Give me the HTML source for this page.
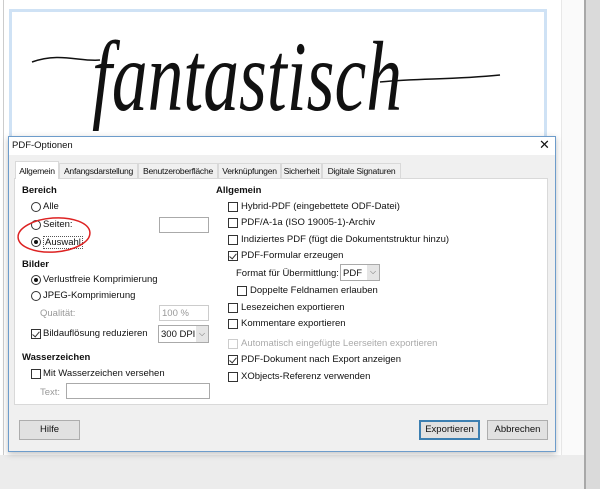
<!DOCTYPE html>
<html><head><meta charset="utf-8"><style>
*{margin:0;padding:0;box-sizing:border-box}
body{width:600px;height:489px;overflow:hidden;background:#fff;font-family:"Liberation Sans",sans-serif;font-size:9.5px;color:#111;position:relative}
.abs{position:absolute}
.rb{position:absolute;width:10px;height:10px;border:1px solid #333;border-radius:50%;background:#fff}
.rb.on::after{content:"";position:absolute;left:2px;top:2px;width:4px;height:4px;border-radius:50%;background:#111}
.cb{position:absolute;width:10px;height:10px;border:1px solid #333;background:#fff}
.cb.on::after{content:"";position:absolute;left:2px;top:0px;width:3px;height:6px;border:solid #333;border-width:0 1px 1px 0;transform:rotate(40deg)}
.t{position:absolute;white-space:nowrap}
.b{font-weight:bold}
.g{color:#999}
.inp{position:absolute;border:1px solid #aaa;background:#fff}
.btn{position:absolute;border:1px solid #adadad;background:#e1e1e1;text-align:center;line-height:18px}
.tab{position:absolute;top:163px;height:15px;line-height:14px;border:1px solid #d9d9d9;border-bottom:none;background:#f0f0f0;font-size:8.6px;letter-spacing:-0.25px;text-align:center;white-space:nowrap;overflow:hidden}
</style></head><body>
<div class="abs" style="left:3px;top:0;width:1px;height:489px;background:#ccc"></div>
<div class="abs" style="left:561px;top:0;width:23px;height:489px;background:#fafafa;border-left:1px solid #e8e8e8"></div>
<div class="abs" style="left:584px;top:0;width:16px;height:489px;background:#dadada;border-left:2px solid #a8a8a8"></div>
<div class="abs" style="left:0;top:455px;width:584px;height:34px;background:#ececec"></div>
<div class="abs" style="left:9px;top:9px;width:538px;height:140px;border:3px solid #cfe2f5"></div>
<svg class="abs" style="left:0;top:0" width="560" height="140">
<path d="M32 62 C60 52 80 62 100 60" stroke="#111" stroke-width="1.5" fill="none"/>
<path d="M380 82 C420 78 450 80 500 75" stroke="#111" stroke-width="1.5" fill="none"/>
<text x="92" y="112" font-family="Liberation Serif" font-style="italic" font-size="80" fill="#111" textLength="310" lengthAdjust="spacingAndGlyphs" transform="translate(0,-30) scale(1,1.25)">fantastisch</text>
</svg>
<div class="abs" style="left:8px;top:136px;width:548px;height:316px;background:#f0f0f0;border:1px solid #6d9ccb;box-shadow:0 2px 6px rgba(0,0,0,.25)">
</div>
<div class="abs" style="left:9px;top:137px;width:546px;height:18px;background:#fff"></div>
<div class="t" style="left:12px;top:140px">PDF-Optionen</div>
<div class="t" style="left:539px;top:137px;font-size:13px">✕</div>
<div class="abs" style="left:14px;top:178px;width:534px;height:227px;background:#fff;border:1px solid #d9d9d9"></div>
<div class="tab" style="left:15px;top:161px;width:44px;height:18px;background:#fff;padding-top:2px">Allgemein</div>
<div class="tab" style="left:59px;width:79px">Anfangsdarstellung</div>
<div class="tab" style="left:138px;width:80px">Benutzeroberfläche</div>
<div class="tab" style="left:218px;width:63px">Verknüpfungen</div>
<div class="tab" style="left:281px;width:41px">Sicherheit</div>
<div class="tab" style="left:322px;width:79px">Digitale Signaturen</div>

<div class="t b" style="left:22px;top:185px">Bereich</div>
<div class="rb" style="left:31px;top:202px"></div><div class="t" style="left:43px;top:201px">Alle</div>
<div class="rb" style="left:31px;top:220px"></div><div class="t" style="left:43px;top:219px">Seiten:</div>
<div class="inp" style="left:159px;top:217px;width:50px;height:16px"></div>
<div class="rb on" style="left:31px;top:237px"></div><div class="t" style="left:43px;top:236px;border:1px dotted #555;padding:0 1px">Auswahl</div>
<svg class="abs" style="left:16px;top:215px" width="80" height="40"><ellipse cx="38" cy="20" rx="36" ry="17" fill="none" stroke="#d22" stroke-width="1.5" transform="rotate(-4 38 20)"/></svg>
<div class="t b" style="left:22px;top:259px">Bilder</div>
<div class="rb on" style="left:31px;top:275px"></div><div class="t" style="left:43px;top:274px">Verlustfreie Komprimierung</div>
<div class="rb" style="left:31px;top:291px"></div><div class="t" style="left:43px;top:290px">JPEG-Komprimierung</div>
<div class="t g" style="left:40px;top:308px">Qualität:</div>
<div class="inp" style="left:159px;top:305px;width:50px;height:16px;border-color:#ccc"></div><div class="t g" style="left:162px;top:308px">100 %</div>
<div class="cb on" style="left:31px;top:329px"></div><div class="t" style="left:43px;top:328px">Bildauflösung reduzieren</div>
<div class="inp" style="left:158px;top:325px;width:51px;height:18px"></div><div class="t" style="left:161px;top:329px">300 DPI</div>
<div class="abs" style="left:196px;top:326px;width:12px;height:16px;background:#e5e5e5;font-size:8px;text-align:center;line-height:15px;color:#666">⌵</div>
<div class="t b" style="left:22px;top:352px">Wasserzeichen</div>
<div class="cb" style="left:31px;top:369px"></div><div class="t" style="left:43px;top:368px">Mit Wasserzeichen versehen</div>
<div class="t g" style="left:40px;top:387px">Text:</div>
<div class="inp" style="left:66px;top:383px;width:144px;height:16px"></div>

<div class="t b" style="left:216px;top:185px">Allgemein</div>
<div class="cb" style="left:228px;top:202px"></div><div class="t" style="left:241px;top:201px">Hybrid-PDF (eingebettete ODF-Datei)</div>
<div class="cb" style="left:228px;top:218px"></div><div class="t" style="left:241px;top:217px">PDF/A-1a (ISO 19005-1)-Archiv</div>
<div class="cb" style="left:228px;top:235px"></div><div class="t" style="left:241px;top:234px">Indiziertes PDF (fügt die Dokumentstruktur hinzu)</div>
<div class="cb on" style="left:228px;top:251px"></div><div class="t" style="left:241px;top:250px">PDF-Formular erzeugen</div>
<div class="t" style="left:236px;top:268px">Format für Übermittlung:</div>
<div class="inp" style="left:340px;top:264px;width:40px;height:17px"></div><div class="t" style="left:343px;top:268px">PDF</div>
<div class="abs" style="left:367px;top:265px;width:12px;height:15px;background:#e5e5e5;font-size:8px;text-align:center;line-height:14px;color:#666">⌵</div>
<div class="cb" style="left:237px;top:286px"></div><div class="t" style="left:250px;top:285px">Doppelte Feldnamen erlauben</div>
<div class="cb" style="left:228px;top:303px"></div><div class="t" style="left:241px;top:302px">Lesezeichen exportieren</div>
<div class="cb" style="left:228px;top:319px"></div><div class="t" style="left:241px;top:318px">Kommentare exportieren</div>
<div class="cb" style="left:228px;top:339px;border-color:#ccc"></div><div class="t g" style="left:241px;top:338px;color:#aaa">Automatisch eingefügte Leerseiten exportieren</div>
<div class="cb on" style="left:228px;top:355px"></div><div class="t" style="left:241px;top:354px">PDF-Dokument nach Export anzeigen</div>
<div class="cb" style="left:228px;top:372px"></div><div class="t" style="left:241px;top:371px">XObjects-Referenz verwenden</div>

<div class="btn" style="left:19px;top:420px;width:61px;height:20px">Hilfe</div>
<div class="btn" style="left:419px;top:420px;width:61px;height:20px;border:2px solid #3c7fb1;line-height:16px">Exportieren</div>
<div class="btn" style="left:487px;top:420px;width:61px;height:20px">Abbrechen</div>
</body></html>
